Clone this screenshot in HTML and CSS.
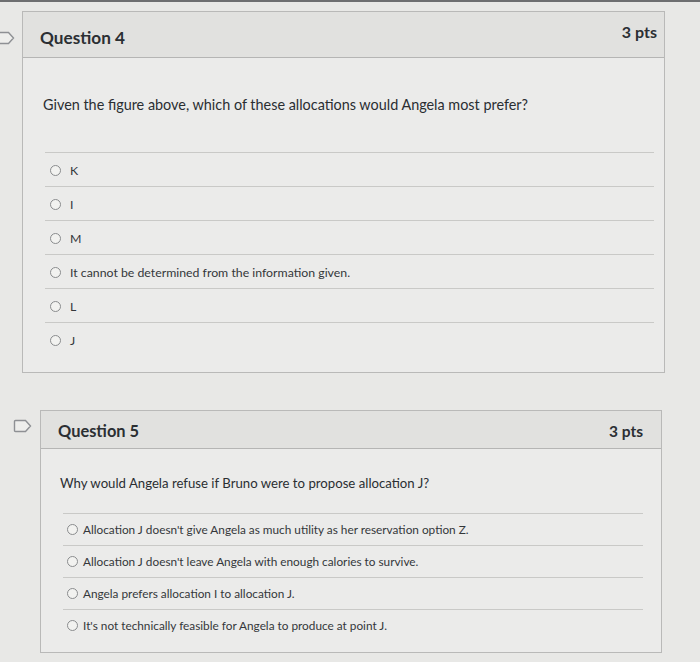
FILE: index.html
```html
<!DOCTYPE html>
<html>
<head>
<meta charset="utf-8">
<link rel="stylesheet" href="styles.css">
</head>
<body>
<div class="topstrip"></div>
<div class="page">
  <div class="qrow q4">
    <svg class="flag" width="19" height="14" viewBox="0 0 19 14"><path d="M2.5 1.5 H12.5 L17.5 7 L12.5 12.5 H2.5 Q1.5 12.5 1.5 11.5 V2.5 Q1.5 1.5 2.5 1.5 Z" fill="#eeeeec" stroke="#8e9094" stroke-width="1.4"/></svg>
    <div class="card">
      <div class="head"><span class="title">Question 4</span><span class="pts">3 pts</span></div>
      <div class="body">
        <p class="qtext">Given the figure above, which of these allocations would Angela most prefer?</p>
        <ul class="opts">
          <li><span class="radio"></span>K</li>
          <li><span class="radio"></span>I</li>
          <li><span class="radio"></span>M</li>
          <li><span class="radio"></span>It cannot be determined from the information given.</li>
          <li><span class="radio"></span>L</li>
          <li class="last"><span class="radio"></span>J</li>
        </ul>
      </div>
    </div>
  </div>
  <div class="qrow q5">
    <svg class="flag" width="19" height="14" viewBox="0 0 19 14"><path d="M2.5 1.5 H12.5 L17.5 7 L12.5 12.5 H2.5 Q1.5 12.5 1.5 11.5 V2.5 Q1.5 1.5 2.5 1.5 Z" fill="#eeeeec" stroke="#8e9094" stroke-width="1.4"/></svg>
    <div class="card">
      <div class="head"><span class="title">Question 5</span><span class="pts">3 pts</span></div>
      <div class="body">
        <p class="qtext">Why would Angela refuse if Bruno were to propose allocation J?</p>
        <ul class="opts">
          <li><span class="radio"></span>Allocation J doesn't give Angela as much utility as her reservation option Z.</li>
          <li><span class="radio"></span>Allocation J doesn't leave Angela with enough calories to survive.</li>
          <li><span class="radio"></span>Angela prefers allocation I to allocation J.</li>
          <li class="last"><span class="radio"></span>It's not technically feasible for Angela to produce at point J.</li>
        </ul>
      </div>
    </div>
  </div>
</div>
</body>
</html>
```

FILE: styles.css
```css
*, *::before, *::after {
  box-sizing: border-box;
}
html, body {
  margin: 0;
  padding: 0;
}
body {
  width: 700px;
  height: 662px;
  overflow: hidden;
  background: #e8e8e6;
  font-family: Lato, "Open Sans", sans-serif;
  color: #2f3438;
}
.topstrip {
  height: 2px;
  background: #6d6e70;
}
.page {
  padding-top: 9px;
}
.qrow {
  display: flex;
  align-items: flex-start;
}
.q4 {
  margin-left: -4px;
  gap: 7px;
}
.q5 {
  margin-left: 13px;
  margin-top: 37px;
  gap: 8px;
}
.flag {
  flex: none;
}
.q4 .flag { margin-top: 20px; }
.q5 .flag { margin-top: 9px; }
.card {
  border: 1px solid #b9b9b8;
  background: #ebebea;
}
.q4 .card { width: 643px; }
.q5 .card { width: 622px; }
.head {
  display: flex;
  justify-content: space-between;
  align-items: center;
  background: #e1e1df;
  border-bottom: 1px solid #b5b5b4;
}
.q4 .head {
  height: 46px;
  padding: 0 7px 0 17px;
}
.q5 .head {
  height: 38px;
  padding: 0 18px 0 17px;
}
.title {
  font-weight: 700;
  color: #2b2f33;
}
.q4 .title { font-size: 17.2px; margin-top: 6px; }
.q5 .title { font-size: 16.4px; margin-top: 2px; }
.pts {
  font-weight: 700;
  color: #2b2f33;
}
.q4 .pts { font-size: 16px; margin-top: -6px; }
.q5 .pts { font-size: 15.5px; margin-top: 2px; }
.qtext {
  margin: 0;
  color: #2a2e32;
}
.q4 .qtext {
  font-size: 14.4px;
  line-height: 20px;
  padding: 37px 0 0 20px;
  height: 94px;
}
.q5 .qtext {
  font-size: 13.2px;
  line-height: 20px;
  padding: 24px 0 0 19px;
  height: 64px;
}
.opts {
  list-style: none;
  margin: 0;
}
.q4 .opts {
  padding: 0 10px 16px 22px;
}
.q5 .opts {
  padding: 0 18px 11px 22px;
}
.opts li {
  display: flex;
  align-items: center;
  border-top: 1px solid #c9c9c7;
  color: #34373a;
}
.q4 .opts li {
  height: 34px;
  font-size: 12.3px;
  padding-left: 5px;
  padding-top: 2px;
}
.q4 .radio { margin-right: 9px; }
.q5 .opts li {
  height: 32px;
  font-size: 11.8px;
  padding-left: 4px;
  padding-top: 0;
}
.radio {
  width: 11px;
  height: 11px;
  border: 1px solid #8a8c8e;
  border-radius: 50%;
  background: #f2f2f0;
  margin-right: 5px;
  flex: none;
}
```
